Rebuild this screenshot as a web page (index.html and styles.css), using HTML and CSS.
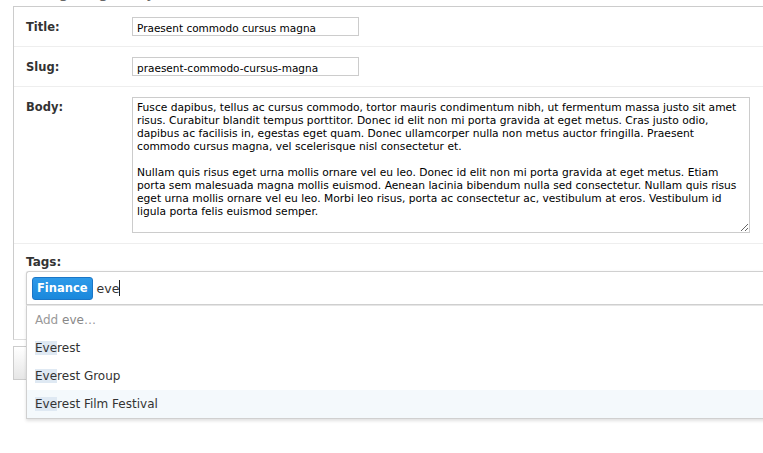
FILE: index.html
```html
<!DOCTYPE html>
<html lang="en">
<head>
	<meta charset="UTF-8">
	<title>Change entry</title>
	<link rel="stylesheet" href="styles.css">
</head>
<body>
	<h2 class="title">Editing blog entry</h2>
	<div class="module">
		<div class="row">
			<label>Title:</label>
			<input type="text" class="text" value="Praesent commodo cursus magna">
		</div>
		<div class="row">
			<label>Slug:</label>
			<input type="text" class="text" value="praesent-commodo-cursus-magna">
		</div>
		<div class="row">
			<label>Body:</label>
			<textarea class="body">Fusce dapibus, tellus ac cursus commodo, tortor mauris condimentum nibh, ut fermentum massa justo sit amet risus. Curabitur blandit tempus porttitor. Donec id elit non mi porta gravida at eget metus. Cras justo odio, dapibus ac facilisis in, egestas eget quam. Donec ullamcorper nulla non metus auctor fringilla. Praesent commodo cursus magna, vel scelerisque nisl consectetur et.

Nullam quis risus eget urna mollis ornare vel eu leo. Donec id elit non mi porta gravida at eget metus. Etiam porta sem malesuada magna mollis euismod. Aenean lacinia bibendum nulla sed consectetur. Nullam quis risus eget urna mollis ornare vel eu leo. Morbi leo risus, porta ac consectetur ac, vestibulum at eros. Vestibulum id ligula porta felis euismod semper.</textarea>
		</div>
		<div class="row tags">
			<label>Tags:</label>
			<div class="tagbox">
				<div class="control">
					<span class="tag">Finance</span>
					<span class="typed">eve</span><span class="caret"></span>
				</div>
				<div class="dropdown">
					<div class="option create">Add <b>eve</b>&hellip;</div>
					<div class="option"><span class="hl">Eve</span>rest</div>
					<div class="option"><span class="hl">Eve</span>rest Group</div>
					<div class="option active"><span class="hl">Eve</span>rest Film Festival</div>
				</div>
			</div>
		</div>
	</div>
	<div class="submit">
		<button class="delete">Delete</button>
	</div>
</body>
</html>
```

FILE: styles.css
```css
html {
	overflow: hidden;
	height: 100%;
}
body {
	margin: 0;
	background: #fff;
	font-family: "DejaVu Sans", Verdana, sans-serif;
	color: #333;
	width: 763px;
	min-height: 453px;
}
h2.title {
	margin: -16px 0 0 13px;
	height: 22px;
	line-height: 18px;
	font-size: 16px;
	font-weight: normal;
	color: #666;
}
div.module {
	margin: 0 0 0 13px;
	border: 1px solid #ccc;
	border-right: none;
	border-bottom-color: #ddd;
}
.row {
	display: flex;
	padding: 10px 12px;
	border-bottom: 1px solid #eee;
}
.row label {
	width: 106px;
	font-size: 11.5px;
	font-weight: bold;
	color: #333;
	padding-top: 3px;
}
input.text {
	width: 227px;
	height: 19px;
	box-sizing: border-box;
	margin: 0;
	border: 1px solid #ccc;
	padding: 2px 4px 0;
	font: 10.5px "DejaVu Sans", Verdana, sans-serif;
	color: #000;
}
textarea.body {
	width: 618px;
	height: 136px;
	box-sizing: border-box;
	margin: 0;
	border: 1px solid #ccc;
	padding: 3px 4px;
	font: 10.7px/13px "DejaVu Sans", Verdana, sans-serif;
	color: #000;
	resize: both;
}
.row.tags {
	display: block;
	border-bottom: none;
	height: 85px;
	padding: 10px 12px 0;
}
.row.tags label {
	display: block;
	height: 16px;
	padding-top: 1px;
	font-size: 12px;
}
.tagbox {
	position: relative;
	width: 740px;
}
.control {
	display: flex;
	align-items: center;
	height: 34px;
	box-sizing: border-box;
	padding: 0 5px;
	background: #fff;
	border: 1px solid #d0d0d0;
	border-right: none;
	border-radius: 3px 0 0 0;
	box-shadow: 0 1px 3px rgba(0,0,0,.12);
	font-size: 13px;
	color: #333;
}
.tag {
	display: inline-block;
	height: 23px;
	line-height: 21px;
	box-sizing: border-box;
	padding: 0 4px;
	border: 1px solid #1b76c6;
	border-radius: 3px;
	background: linear-gradient(#2e9ae9, #1a88dc);
	color: #fff;
	font-weight: bold;
	font-size: 11.5px;
	margin-right: 4px;
}
.typed {
	font-size: 12.5px;
}
.caret {
	display: inline-block;
	width: 1px;
	height: 16px;
	background: #222;
}
.dropdown {
	position: absolute;
	top: 34px;
	left: 0;
	right: 0;
	z-index: 5;
	background: #fff;
	border: 1px solid #d0d0d0;
	border-top: 1px solid #e6e6e6;
	border-right: none;
	box-shadow: 0 2px 3px rgba(0,0,0,.12);
	font-size: 12px;
	color: #333;
}
.option {
	height: 28px;
	line-height: 28px;
	padding: 0 8px;
}
.option.create {
	color: #999;
}
.option.create b {
	font-weight: normal;
	color: #888;
}
.option.active {
	background: #f4f9fc;
}
.hl {
	background: #dfe9f3;
}
.submit {
	margin: 6px 0 0 13px;
}
button.delete {
	height: 34px;
	width: 100px;
	border: 1px solid #ccc;
	background: linear-gradient(#fff, #e6e6e6);
	color: #b00;
	font: 12px "DejaVu Sans", sans-serif;
}
```
